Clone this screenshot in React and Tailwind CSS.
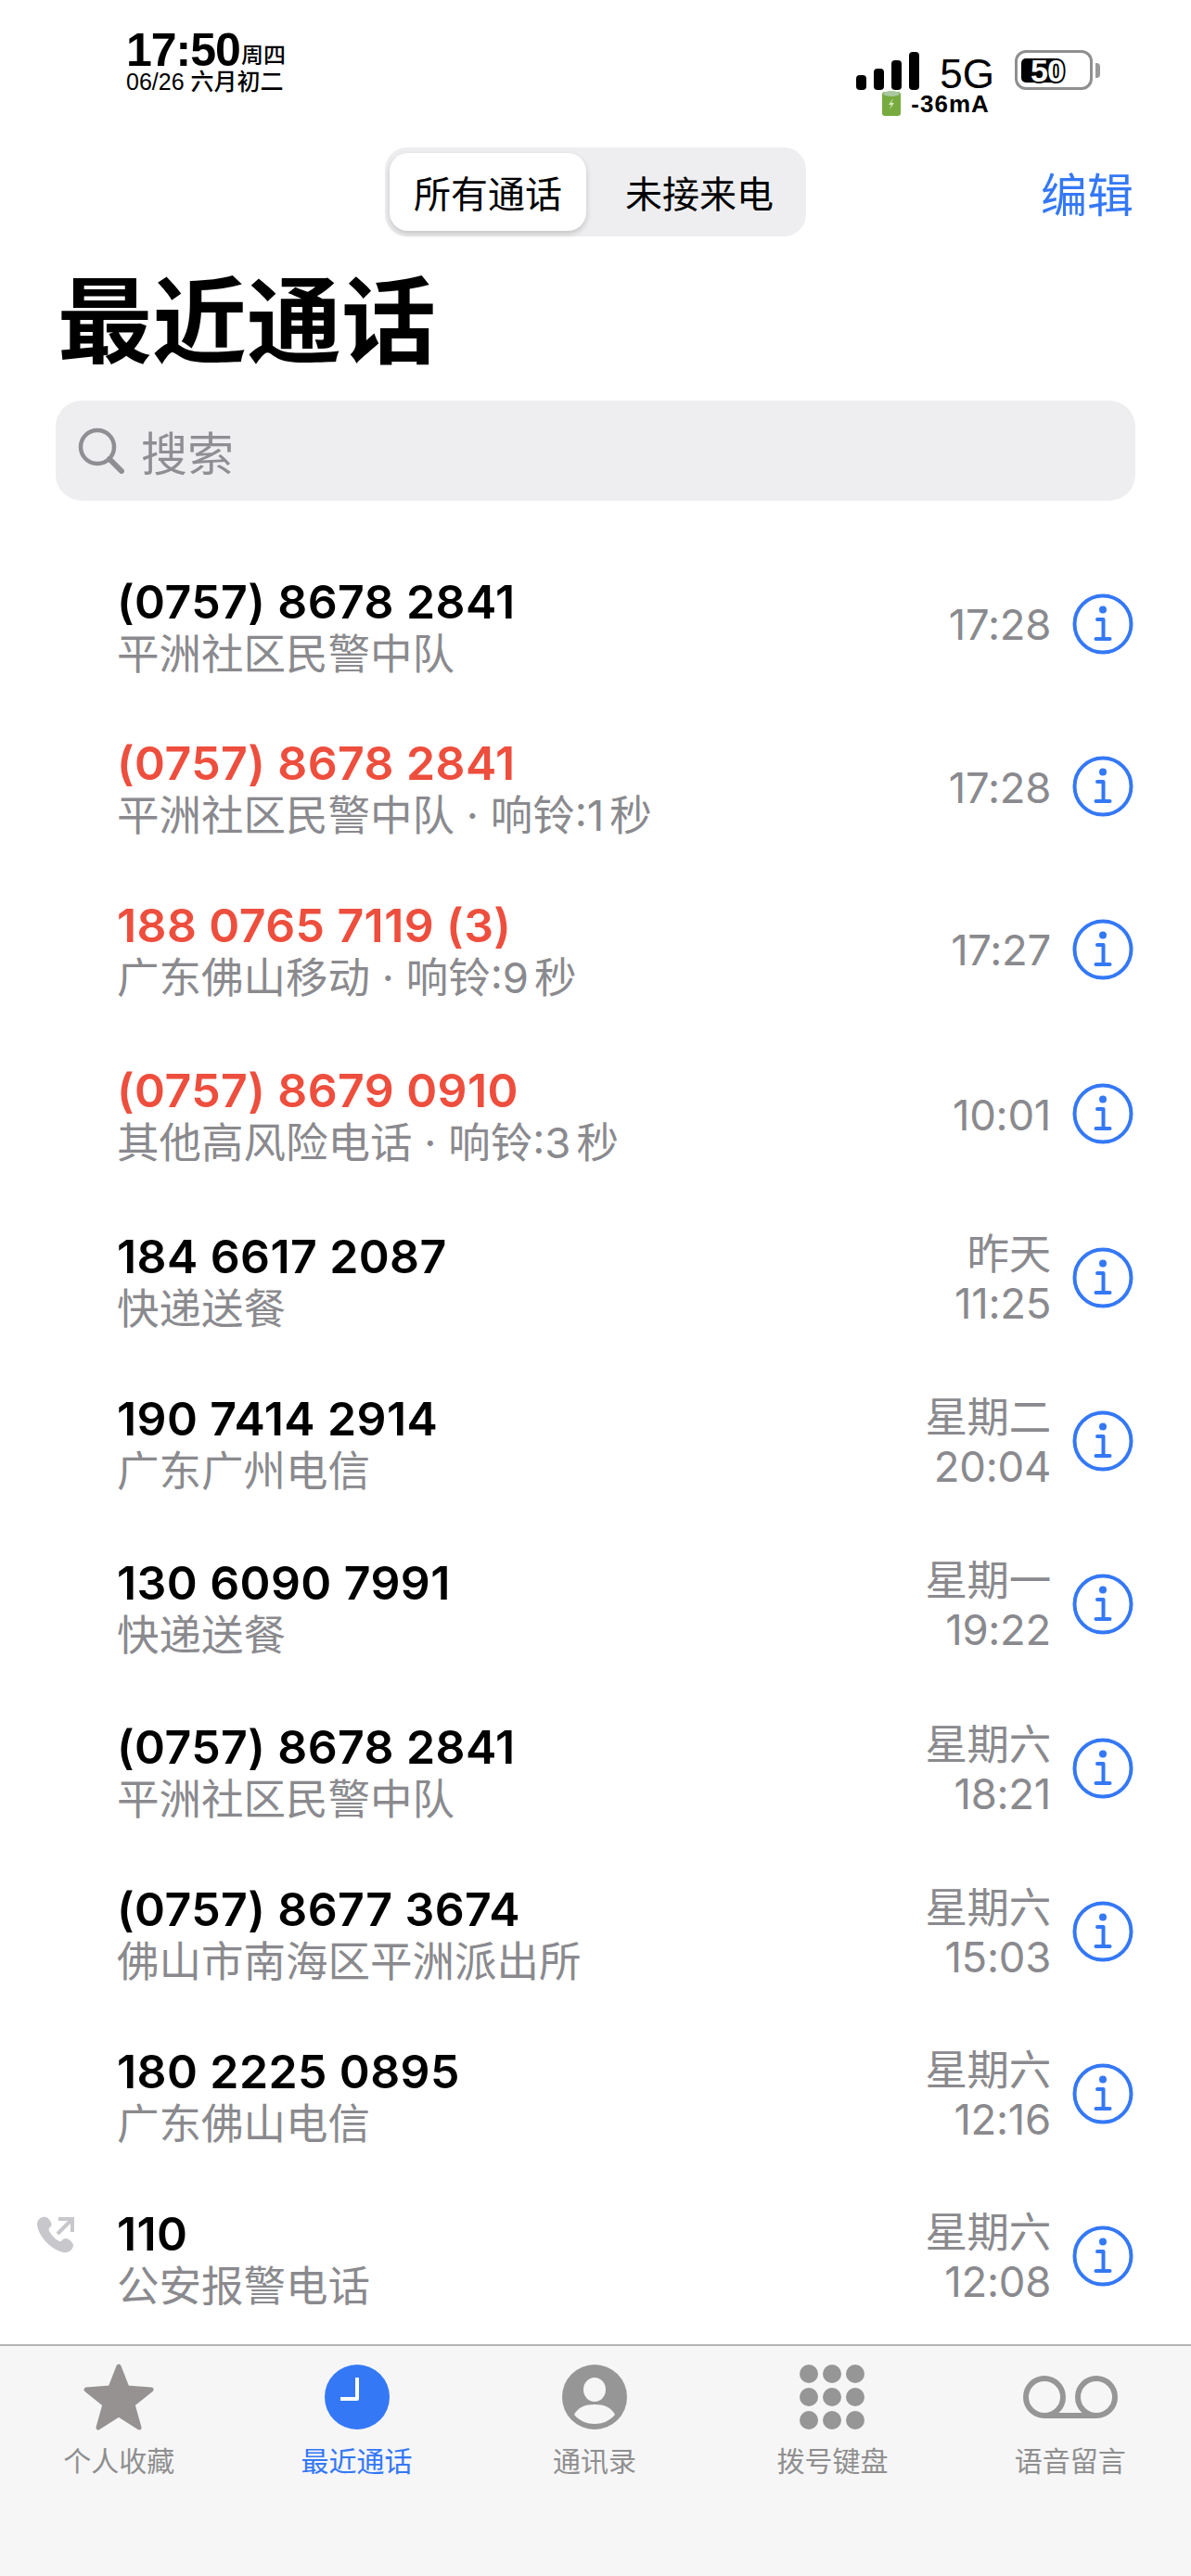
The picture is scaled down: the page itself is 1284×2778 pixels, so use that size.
const calls = [
  { name: "(0757) 8678 2841", sub: "平洲社区民警中队", time: ["17:28"], h: "h-[177px]" },
  { name: "(0757) 8678 2841", sub: "平洲社区民警中队", ring: "响铃:1", time: ["17:28"], missed: true, h: "h-[174px]" },
  { name: "188 0765 7119 (3)", sub: "广东佛山移动", ring: "响铃:9", time: ["17:27"], missed: true, h: "h-[177px]" },
  { name: "(0757) 8679 0910", sub: "其他高风险电话", ring: "响铃:3", time: ["10:01"], missed: true, h: "h-[178px]" },
  { name: "184 6617 2087", sub: "快递送餐", time: ["昨天", "11:25"], h: "h-[176px]" },
  { name: "190 7414 2914", sub: "广东广州电信", time: ["星期二", "20:04"], h: "h-[175px]" },
  { name: "130 6090 7991", sub: "快递送餐", time: ["星期一", "19:22"], h: "h-[178px]" },
  { name: "(0757) 8678 2841", sub: "平洲社区民警中队", time: ["星期六", "18:21"], h: "h-[176px]" },
  { name: "(0757) 8677 3674", sub: "佛山市南海区平洲派出所", time: ["星期六", "15:03"], h: "h-[175px]" },
  { name: "180 2225 0895", sub: "广东佛山电信", time: ["星期六", "12:16"], h: "h-[175px]" },
  { name: "110", sub: "公安报警电话", time: ["星期六", "12:08"], outgoing: true, h: "h-[175px]" },
];

const tabs = [
  { label: "个人收藏", icon: <StarIcon /> },
  { label: "最近通话", icon: <ClockIcon />, active: true },
  { label: "通讯录", icon: <PersonIcon /> },
  { label: "拨号键盘", icon: <KeypadIcon /> },
  { label: "语音留言", icon: <VoicemailIcon /> },
];

function InfoIcon() {
  return (
    <svg width="66" height="66" viewBox="0 0 66 66" fill="none" stroke="#3478f6" strokeLinecap="round">
      <circle cx="33" cy="33" r="30.5" strokeWidth="4" />
      <circle cx="33" cy="17.5" r="4" fill="#3478f6" stroke="none" />
      <path d="M27 28h6.5v20M25.5 49h15" strokeWidth="4" strokeLinejoin="round" />
    </svg>
  );
}

function OutgoingIcon() {
  return (
    <svg width="40" height="40" viewBox="0 0 40 40" fill="#c7c7cc">
      <path d="M6 1 C2 2 0 5 0 9 C1 20 13 35 28 39 C33 40 38 37 39 32 C39 29 37 27 34 25 C31 23 28 24 26 27 C23 28 18 23 15 19 C12 15 12 13 14 12 C16 10 16 8 14 5 C12 1 9 0 6 1 Z" />
      <path d="M22 19 L36 5 M23 3 H38 V17" fill="none" stroke="#c7c7cc" strokeWidth="4" />
    </svg>
  );
}

function StarIcon() {
  return (
    <svg width="78" height="74" viewBox="0 0 78 74" fill="#969292" stroke="#969292" strokeWidth="5" strokeLinejoin="round">
      <path d="M39 4 L48 27 L74 29 L54 45 L61 70 L39 56 L17 70 L24 45 L4 29 L30 27 Z" />
    </svg>
  );
}

function ClockIcon() {
  return (
    <svg width="70" height="70" viewBox="0 0 70 70">
      <circle cx="35" cy="35" r="35" fill="#3478f6" />
      <path d="M35 14 V37 H17" fill="none" stroke="#fff" strokeWidth="4" strokeLinejoin="round" />
    </svg>
  );
}

function PersonIcon() {
  return (
    <svg width="70" height="70" viewBox="0 0 70 70">
      <circle cx="35" cy="35" r="35" fill="#969696" />
      <ellipse cx="35" cy="27" rx="12" ry="13" fill="#f6f6f7" />
      <path d="M13 54 C17 46 25 43 35 43 C45 43 53 46 57 54 C51 61 43 64 35 64 C27 64 19 61 13 54 Z" fill="#f6f6f7" />
    </svg>
  );
}

function KeypadIcon() {
  const spots = [10, 35, 60];
  return (
    <svg width="70" height="70" viewBox="0 0 70 70" fill="#969696">
      {spots.map((y) => spots.map((x) => <circle key={`${x}-${y}`} cx={x} cy={y} r="10" />))}
    </svg>
  );
}

function VoicemailIcon() {
  return (
    <svg width="102" height="46" viewBox="0 0 102 46" fill="none" stroke="#969696" strokeWidth="6">
      <circle cx="23" cy="23" r="20" />
      <circle cx="79" cy="23" r="20" />
      <path d="M23 43 H79" />
    </svg>
  );
}

function SearchIcon() {
  return (
    <svg width="50" height="50" viewBox="0 0 50 50" fill="none" stroke="#8e8e93" strokeLinecap="round">
      <circle cx="21" cy="21" r="18" strokeWidth="4.5" />
      <path d="M34 34 L47 47" strokeWidth="6" />
    </svg>
  );
}

function SignalBars() {
  return (
    <div className="flex items-end gap-[8px]">
      <div className="h-[16px] w-[11px] rounded-[4px] bg-black" />
      <div className="h-[23px] w-[11px] rounded-[4px] bg-black" />
      <div className="h-[32px] w-[11px] rounded-[4px] bg-black" />
      <div className="h-[41px] w-[11px] rounded-[4px] bg-black" />
    </div>
  );
}

function Battery() {
  return (
    <div className="flex items-center gap-[3px]">
      <div className="flex h-[43px] w-[84px] items-center rounded-[12px] border-[3px] border-[#8f8f8f] pl-[4px]">
        <div className="h-[26px] w-[36px] rounded-l-[5px] bg-black" />
        <span className="ml-[-26px] text-[34px] leading-none font-bold tracking-[-1px] text-white [-webkit-text-stroke:4px_black] [paint-order:stroke_fill]">
          50
        </span>
      </div>
      <div className="h-[16px] w-[5px] rounded-r-[4px] bg-[#9a9a9a]" />
    </div>
  );
}

function GreenCell() {
  return (
    <svg width="22" height="29" viewBox="0 0 22 29">
      <rect x="1" y="2" width="20" height="26" rx="3" fill="#77ab3f" />
      <ellipse cx="11" cy="4" rx="9" ry="3" fill="#a9c9a0" />
      <path d="M13 9 L8 16 H11 L9 21 L14 14 H11 Z" fill="#d9e8c0" />
    </svg>
  );
}

function StatusBar() {
  return (
    <div className="flex h-[159px] items-start justify-between pt-[34px] pr-[98px] pl-[136px] font-['Liberation_Sans','Noto_Sans_CJK_SC',sans-serif] text-black">
      <div className="flex flex-col">
        <div className="flex items-end">
          <span className="text-[50px] leading-[40px] font-bold tracking-[-1px]">17:50</span>
          <span className="ml-[1px] text-[24px] leading-[28px] font-medium">周四</span>
        </div>
        <div className="mt-[1px] text-[25px] leading-[26px] font-medium">06/26 六月初二</div>
      </div>
      <div className="flex flex-col pt-[20px]">
        <div className="flex items-end gap-[22px]">
          <SignalBars />
          <span className="text-[44px] leading-[34px]">5G</span>
          <Battery />
        </div>
        <div className="flex items-center gap-[10px] pl-[27px]">
          <GreenCell />
          <span className="text-[26px] leading-[28px] font-bold tracking-[1px]">-36mA</span>
        </div>
      </div>
    </div>
  );
}

function Segmented() {
  return (
    <div className="relative flex items-center justify-center">
      <div className="flex h-[96px] w-[454px] items-center rounded-[24px] bg-[#eeeef0] p-[5px] text-[40px] text-black">
        <div className="flex h-[84px] w-[212px] items-center justify-center rounded-[20px] bg-white shadow-[0_3px_6px_rgba(0,0,0,0.18)]">
          所有通话
        </div>
        <div className="flex flex-1 items-center justify-center pl-[12px]">未接来电</div>
      </div>
      <span className="absolute top-[21px] right-[62px] text-[50px] leading-[54px] text-[#3478f6]">编辑</span>
    </div>
  );
}

function CallRow({ call }) {
  return (
    <div className={`flex shrink-0 items-center pr-[62px] pl-[40px] ${call.h}`}>
      <div className="w-[86px] shrink-0 self-start pt-[45px]">{call.outgoing && <OutgoingIcon />}</div>
      <div className="flex flex-1 flex-col pt-[4px]">
        <div
          className={`font-['Inter','Noto_Sans_CJK_SC',sans-serif] text-[50px] leading-[55px] font-semibold tracking-[0.4px] ${
            call.missed ? "text-[#ee4e3d]" : "text-black"
          }`}
        >
          {call.name}
        </div>
        <div className="text-[45.5px] leading-[50px] text-[#8a8a8e]">
          {call.sub}
          {call.ring && (
            <span className="font-['Inter','Noto_Sans_CJK_SC',sans-serif]">
              {" · "}
              {call.ring}
              <span className="ml-[6px]">秒</span>
            </span>
          )}
        </div>
      </div>
      <div className="mr-[23px] flex flex-col items-end pt-[2px] font-['Inter','Noto_Sans_CJK_SC',sans-serif] text-[45.5px] leading-[53px] tracking-[-0.3px] text-[#8a8a8e]">
        {call.time.map((t) => (
          <span key={t}>{t}</span>
        ))}
      </div>
      <InfoIcon />
    </div>
  );
}

function TabBar() {
  return (
    <div className="flex h-[250px] border-t-2 border-[#b4b4b6] bg-[#f6f6f7] pt-[17px] pr-[2px]">
      {tabs.map((tab) => (
        <div key={tab.label} className="flex flex-1 flex-col items-center">
          <div className="flex h-[76px] items-center justify-center">{tab.icon}</div>
          <span className={`mt-[11px] text-[30px] leading-[36px] ${tab.active ? "text-[#3478f6]" : "text-[#8f8f8f]"}`}>
            {tab.label}
          </span>
        </div>
      ))}
    </div>
  );
}

export default function App() {
  return (
    <div className="flex h-[2778px] w-[1284px] flex-col overflow-hidden bg-white font-['Noto_Sans_CJK_SC',sans-serif]">
      <StatusBar />
      <Segmented />
      <h1 className="mt-[25px] pl-[62px] text-[102px] leading-[120px] font-bold text-black">最近通话</h1>
      <div className="mx-[60px] mt-[32px] flex h-[108px] items-center rounded-[28px] bg-[#eeeef0] pl-[24px] text-[50px] text-[#8e8e93]">
        <SearchIcon />
        <span className="ml-[18px]">搜索</span>
      </div>
      <div className="mt-[44px] flex flex-1 flex-col overflow-hidden">
        {calls.map((call, i) => (
          <CallRow key={i} call={call} />
        ))}
      </div>
      <TabBar />
    </div>
  );
}
